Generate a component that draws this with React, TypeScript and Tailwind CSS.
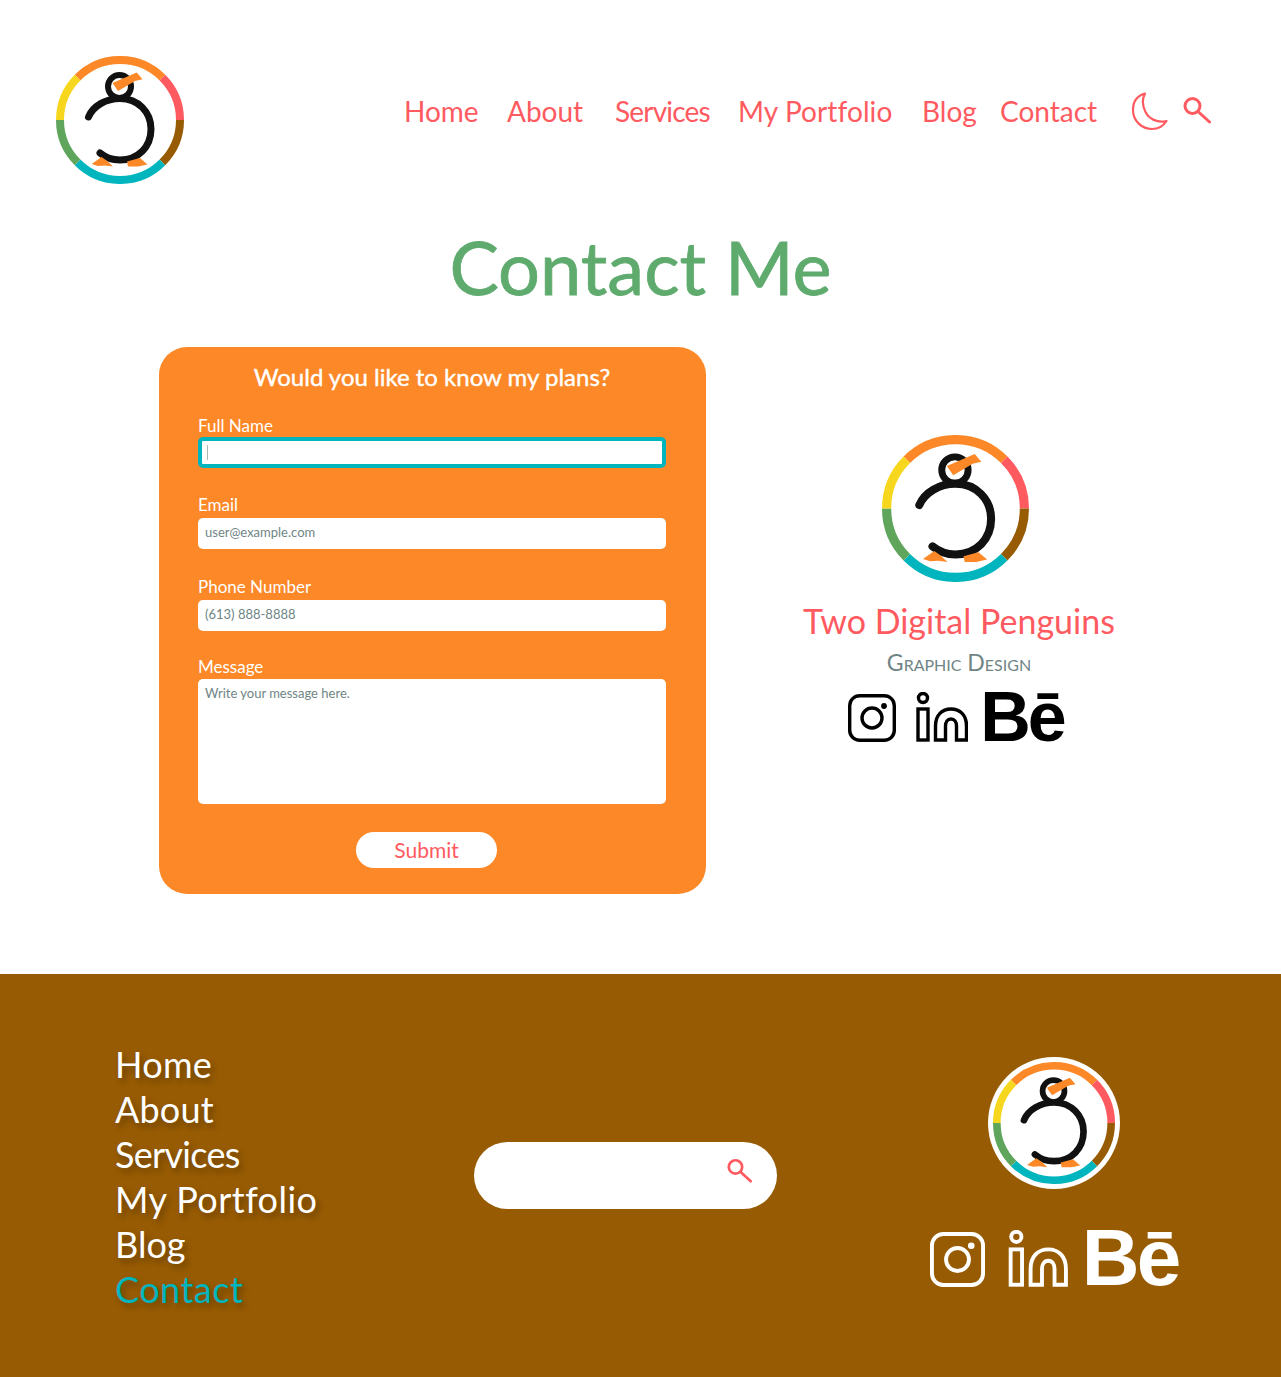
import React from "react";

const navLinks = [
  { label: "Home", className: "w-[103px]" },
  { label: "About", className: "w-[108px]" },
  { label: "Services", className: "w-[123px] tracking-[-0.8px]" },
  { label: "My Portfolio", className: "w-[184px] tracking-[0.1px]" },
  { label: "Blog", className: "w-[78px]" },
  { label: "Contact", className: "w-[132px]" },
];

const footerLinks = [
  { label: "Home", className: "tracking-[0.3px]" },
  { label: "About", className: "tracking-[0.2px]" },
  { label: "Services", className: "tracking-[-0.7px]" },
  { label: "My Portfolio", className: "tracking-[0.45px]" },
  { label: "Blog", className: "" },
];

const polar = (deg: number, r = 60) => {
  const a = (deg * Math.PI) / 180;
  return `${(64 + r * Math.cos(a)).toFixed(2)} ${(64 + r * Math.sin(a)).toFixed(2)}`;
};

const ringParts = [
  { from: -135, to: -45, color: "#FC8827" },
  { from: -45, to: 0, color: "#FF5A5F" },
  { from: 0, to: 45, color: "#975B03" },
  { from: 45, to: 135, color: "#00B5BD" },
  { from: 135, to: 180, color: "#5FA65C" },
  { from: 180, to: 225, color: "#F7D71E" },
];

const Logo = ({ className }: { className: string }) => (
  <svg viewBox="0 0 128 128" className={className} fill="none">
    {ringParts.map((p) => (
      <path
        key={p.from}
        d={`M${polar(p.from)} A60 60 0 0 1 ${polar(p.to)}`}
        stroke={p.color}
        strokeWidth="8"
      />
    ))}
    <circle cx="63.5" cy="30.5" r="11.5" stroke="#111" strokeWidth="6" />
    <path
      d="M32.5 61 C37 50 50 42.5 64 42.5 C82 42.5 95 56 95 73 C95 91 82 104 64 104 C56 104 50 102 44 97"
      stroke="#111"
      strokeWidth="7"
      strokeLinecap="round"
    />
    <path d="M56.5 27 L80.7 16.5 L86.5 23.3 L79 25 L62 35Z" fill="#FC8827" />
    <path d="M35.7 108 L45.5 101 L50.5 104.5 L57 110.5 L49 109.5 L42 110Z" fill="#FC8827" />
    <path d="M71 105.5 L84 102 L91.5 108.5 L82 110.5 L72 110.5Z" fill="#FC8827" />
  </svg>
);

const SearchIcon = ({ className }: { className: string }) => (
  <svg viewBox="0 0 28 28" className={className} fill="none" stroke="#FF5A5F" strokeWidth="3">
    <circle cx="9.5" cy="10" r="7.5" />
    <path d="M15 15.5 L26.5 26" strokeLinecap="round" />
  </svg>
);

const Socials = ({
  color,
  stroke,
  igSize,
  inClass,
  beClass,
  gapClass,
}: {
  color: string;
  stroke: string;
  igSize: string;
  inClass: string;
  beClass: string;
  gapClass: string;
}) => (
  <div className={`flex items-end ${gapClass}`}>
    <svg viewBox="0 0 48 48" className={igSize} fill="none" stroke={stroke} strokeWidth="3.4">
      <rect x="1.7" y="1.7" width="44.6" height="44.6" rx="10" />
      <circle cx="24" cy="24" r="10" />
      <circle cx="36" cy="12" r="1.2" fill={stroke} />
    </svg>
    <svg viewBox="0 0 52 50" className={inClass} fill="none" stroke={stroke} strokeWidth="3.4">
      <circle cx="7" cy="6" r="4.5" />
      <rect x="2" y="17" width="10" height="31" />
      <path d="M19.5 48 V34 C19.5 23 26 17 35 17 C44 17 50.5 23 50.5 34 V48 H40.5 V34 C40.5 30 38.5 27 35 27 C31.5 27 29.5 30 29.5 34 V48Z" />
    </svg>
    <span className={beClass} style={{ color }}>
      Bē
    </span>
  </div>
);

const Field = ({
  label,
  placeholder,
  className,
}: {
  label: string;
  placeholder?: string;
  className?: string;
}) => (
  <label className={`block ${className ?? ""}`}>
    <span className="block text-[17px] leading-[20px] text-white">{label}</span>
    <input
      placeholder={placeholder}
      className="block w-full h-[31px] mt-[3px] px-[7px] pb-[4px] rounded-[5px] bg-white text-[13px] placeholder:text-[#6f8585] outline-none"
    />
  </label>
);

export default function App() {
  return (
    <div className="w-[1281px] bg-white font-['Lato',sans-serif] font-normal">
      <header className="flex items-start h-[220px] pl-[56px] pt-[56px]">
        <Logo className="w-[128px] h-[128px] shrink-0" />
        <nav className="flex items-center ml-[220px] mt-[34px] text-[#FF5A5F] text-[28px] leading-[40px]">
          {navLinks.map((l) => (
            <a key={l.label} className={l.className}>
              {l.label}
            </a>
          ))}
          <svg viewBox="0 0 40 42" className="w-[40px] h-[42px] -ml-[2px]" fill="none" stroke="#FF5A5F" strokeWidth="2.2">
            <path d="M15 3.5 C6 6 3 13 3 20 C3 31 12 39 22 39 C29 39 34 35 36.5 31 C27 33 19 29 15.5 22 C12 15 12 9 15 3.5Z" strokeLinejoin="round" />
          </svg>
          <SearchIcon className="w-[28px] h-[28px] ml-[13px] -mt-[2px]" />
        </nav>
      </header>

      <h1 className="text-center text-[74px] leading-[100px] -mt-[3px] text-[#5FAB6E] [-webkit-text-stroke:0.8px_#5FAB6E]">Contact Me</h1>

      <main className="flex items-start pl-[159px] mt-[30px] h-[627px]">
        <form className="w-[547px] h-[547px] rounded-[28px] bg-[#FC8827] pl-[39px] pr-[40px] pt-[15px]">
          <h2 className="text-center text-[24px] leading-[32px] -mt-[1px] text-white [-webkit-text-stroke:0.4px_white]">Would you like to know my plans?</h2>
          <label className="block mt-[23px]">
            <span className="block text-[17px] leading-[20px] text-white">Full Name</span>
            <span className="relative block mt-[1px]">
              <input className="block w-full h-[31px] rounded-[5px] bg-white border-[4px] border-[#00B5BD] outline-none" />
              <span className="absolute left-[9px] top-[8px] w-[1px] h-[15px] bg-[#a9b8b8]" />
            </span>
          </label>
          <Field label="Email" placeholder="user@example.com" className="mt-[27px]" />
          <Field label="Phone Number" placeholder="(613) 888-8888" className="mt-[28px]" />
          <label className="block mt-[26px]">
            <span className="block text-[17px] leading-[20px] text-white">Message</span>
            <textarea
              placeholder="Write your message here."
              className="block w-full h-[125px] mt-[2px] px-[7px] pt-[5px] rounded-[5px] bg-white text-[13px] placeholder:text-[#6f8585] outline-none resize-none"
            />
          </label>
          <div className="flex justify-center mt-[28px] pr-[11px]">
            <button type="button" className="w-[141px] h-[36px] pb-[2px] rounded-full bg-white text-[#FF5A5F] text-[21px] leading-none">
              Submit
            </button>
          </div>
        </form>

        <aside className="flex flex-col items-center w-[320px] ml-[93px] mt-[88px]">
          <Logo className="w-[147px] h-[147px] -ml-[8px]" />
          <p className="mt-[16px] text-[34px] leading-[46px] text-[#FF5A5F] whitespace-nowrap">Two Digital Penguins</p>
          <p className="mt-[5px] text-[23px] leading-[26px] text-[#6f8585] [font-variant:small-caps]">Graphic Design</p>
          <Socials
            color="#000"
            stroke="#000"
            igSize="w-[48px] h-[48px]"
            inClass="w-[52px] h-[50px] ml-[20px]"
            beClass="font-['Liberation_Sans',sans-serif] font-bold text-[70px] leading-[50px] tracking-[-3px] ml-[12px]"
            gapClass="mt-[17px] -ml-[6px]"
          />
        </aside>
      </main>

      <footer className="flex items-start h-[403px] bg-[#975B03]">
        <ul className="ml-[115px] mt-[68px] w-[359px] text-[36px] leading-[45px] text-white [text-shadow:3px_4px_6px_rgba(0,0,0,0.3)]">
          {footerLinks.map((l) => (
            <li key={l.label} className={l.className}>
              {l.label}
            </li>
          ))}
          <li className="text-[#00B5BD] tracking-[0.5px]">Contact</li>
        </ul>
        <div className="flex items-center justify-end w-[303px] h-[67px] mt-[168px] pr-[25px] rounded-full bg-white">
          <SearchIcon className="w-[25px] h-[25px] -mt-[10px]" />
        </div>
        <div className="flex flex-col items-center w-[250px] ml-[152px] mt-[83px]">
          <div className="flex items-center justify-center w-[132px] h-[132px] rounded-full bg-white">
            <Logo className="w-[122px] h-[122px]" />
          </div>
          <Socials
            color="#fff"
            stroke="#fff"
            igSize="w-[55px] h-[55px]"
            inClass="w-[60px] h-[57px] ml-[23px]"
            beClass="font-['Liberation_Sans',sans-serif] font-bold text-[80px] leading-[58px] tracking-[-3px] ml-[14px]"
            gapClass="mt-[40px]"
          />
        </div>
      </footer>
    </div>
  );
}
